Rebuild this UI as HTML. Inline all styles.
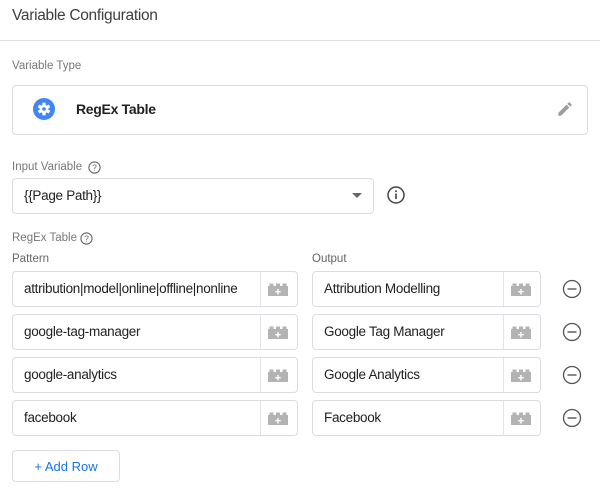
<!DOCTYPE html>
<html><head><style>
*{box-sizing:border-box;margin:0;padding:0}
body{width:600px;height:490px;background:#fff;font-family:"Liberation Sans",Roboto,sans-serif;position:relative;overflow:hidden;color:#202124}
.a{position:absolute}
.lbl{font-size:11.5px;color:#777}
.box{position:absolute;border:1px solid #dadce0;border-radius:4px;background:#fff}
.t{position:absolute;font-size:13.5px;color:#202124;white-space:nowrap;letter-spacing:-0.3px}
.sep{position:absolute;top:0;bottom:0;width:1px;background:#e3e3e3}
</style></head><body>
<div class="a" style="left:12px;top:7px;font-size:15.5px;color:#3c4043;letter-spacing:-0.3px">Variable Configuration</div>
<div class="a" style="left:0;top:40px;width:600px;height:1px;background:#e0e0e0"></div>
<div class="a lbl" style="left:12px;top:60px">Variable Type</div>
<div class="box" style="left:12px;top:85px;width:576px;height:50px"></div>
<svg class="a" style="left:33px;top:98px" width="22" height="22" viewBox="0 0 22 22"><circle cx="11" cy="11" r="11" fill="#4285f4"/><g fill="#fff" transform="translate(11 11)"><circle r="4.4"/><rect x="-1.6" y="-6.3" width="3.2" height="12.6"/><rect x="-1.6" y="-6.3" width="3.2" height="12.6" transform="rotate(60)"/><rect x="-1.6" y="-6.3" width="3.2" height="12.6" transform="rotate(120)"/></g><circle cx="11" cy="11" r="1.8" fill="#4285f4"/></svg>
<div class="a" style="left:76px;top:101px;font-size:14px;font-weight:bold;color:#202124;letter-spacing:-0.3px">RegEx Table</div>
<svg class="a" style="left:556px;top:100px" width="18" height="18" viewBox="0 0 24 24"><path fill="#9e9e9e" d="M3 17.25V21h3.75L17.81 9.94l-3.75-3.75L3 17.25zM20.71 7.04a1 1 0 0 0 0-1.41l-2.34-2.34a1 1 0 0 0-1.41 0l-1.83 1.83 3.75 3.75 1.83-1.83z"/></svg>

<div class="a lbl" style="left:12px;top:161px">Input Variable</div>
<svg class="a" style="left:88px;top:161px" width="13" height="13" viewBox="0 0 13 13"><circle cx="6.5" cy="6.5" r="5.6" fill="none" stroke="#666" stroke-width="1.1"/><text x="6.5" y="9.6" font-size="8.5" text-anchor="middle" fill="#666" font-family="Liberation Sans">?</text></svg>
<div class="box" style="left:12px;top:178px;width:362px;height:36px"></div>
<div class="t" style="left:24px;top:188px">{{Page Path}}</div>
<div class="a" style="left:352px;top:193px;width:0;height:0;border-left:5px solid transparent;border-right:5px solid transparent;border-top:5px solid #666"></div>
<svg class="a" style="left:386px;top:185px" width="20" height="20" viewBox="0 0 20 20"><circle cx="10" cy="10" r="8" fill="none" stroke="#444" stroke-width="1.5"/><rect x="9.2" y="8.6" width="1.6" height="5.5" fill="#444"/><circle cx="10" cy="6.3" r="1" fill="#444"/></svg>

<div class="a lbl" style="left:12px;top:232px">RegEx Table</div>
<svg class="a" style="left:80px;top:232px" width="13" height="13" viewBox="0 0 13 13"><circle cx="6.5" cy="6.5" r="5.6" fill="none" stroke="#666" stroke-width="1.1"/><text x="6.5" y="9.6" font-size="8.5" text-anchor="middle" fill="#666" font-family="Liberation Sans">?</text></svg>
<div class="a lbl" style="left:12px;top:253px;color:#666">Pattern</div>
<div class="a lbl" style="left:312px;top:253px;color:#666">Output</div>

<div class="box" style="left:12px;top:271px;width:286px;height:36px"><div class="sep" style="left:247px"></div></div>
<div class="t" style="left:24px;top:281px">attribution|model|online|offline|nonline</div>
<div class="box" style="left:312px;top:271px;width:229px;height:36px"><div class="sep" style="left:190px"></div></div>
<div class="t" style="left:324px;top:281px">Attribution Modelling</div>

<div class="box" style="left:12px;top:314px;width:286px;height:36px"><div class="sep" style="left:247px"></div></div>
<div class="t" style="left:24px;top:324px">google-tag-manager</div>
<div class="box" style="left:312px;top:314px;width:229px;height:36px"><div class="sep" style="left:190px"></div></div>
<div class="t" style="left:324px;top:324px">Google Tag Manager</div>

<div class="box" style="left:12px;top:357px;width:286px;height:36px"><div class="sep" style="left:247px"></div></div>
<div class="t" style="left:24px;top:367px">google-analytics</div>
<div class="box" style="left:312px;top:357px;width:229px;height:36px"><div class="sep" style="left:190px"></div></div>
<div class="t" style="left:324px;top:367px">Google Analytics</div>

<div class="box" style="left:12px;top:400px;width:286px;height:36px"><div class="sep" style="left:247px"></div></div>
<div class="t" style="left:24px;top:410px">facebook</div>
<div class="box" style="left:312px;top:400px;width:229px;height:36px"><div class="sep" style="left:190px"></div></div>
<div class="t" style="left:324px;top:410px">Facebook</div>

<svg class="a" style="left:0;top:0" width="600" height="490">
<defs>
<g id="b"><rect x="0" y="3" width="20" height="10" fill="#b3b3b3"/><rect x="1.5" y="0.5" width="4" height="3" fill="#b3b3b3"/><rect x="8" y="0.5" width="4" height="3" fill="#b3b3b3"/><rect x="14.5" y="0.5" width="4" height="3" fill="#b3b3b3"/><rect x="9.3" y="6" width="1.4" height="5.5" fill="#fff"/><rect x="7.3" y="8" width="5.4" height="1.4" fill="#fff"/></g>
<g id="m"><circle r="8.5" fill="none" stroke="#555" stroke-width="1.3"/><rect x="-4.5" y="-0.7" width="9" height="1.4" fill="#555"/></g>
</defs>
<use href="#b" x="268" y="283"/><use href="#b" x="511" y="283"/><use href="#m" x="572" y="289"/>
<use href="#b" x="268" y="326"/><use href="#b" x="511" y="326"/><use href="#m" x="572" y="332"/>
<use href="#b" x="268" y="369"/><use href="#b" x="511" y="369"/><use href="#m" x="572" y="375"/>
<use href="#b" x="268" y="412"/><use href="#b" x="511" y="412"/><use href="#m" x="572" y="418"/>
</svg>

<div class="box" style="left:12px;top:450px;width:108px;height:32px"></div>
<div class="a" style="left:12px;top:459px;width:108px;text-align:center;font-size:13px;color:#1a73e8">+ Add Row</div>
</body></html>
